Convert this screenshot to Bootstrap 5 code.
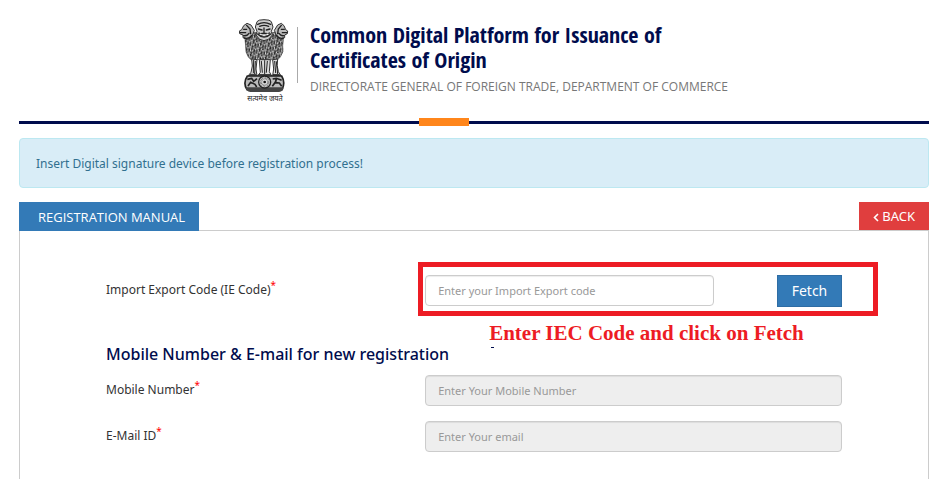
<!DOCTYPE html>
<html lang="en">
<head>
<meta charset="utf-8">
<meta name="viewport" content="width=device-width, initial-scale=1">
<title>Common Digital Platform for Issuance of Certificates of Origin</title>
<link href="https://cdn.jsdelivr.net/npm/bootstrap@5.3.0/dist/css/bootstrap.min.css" rel="stylesheet">
<style>
  body { font-family: "Noto Sans", "Open Sans", sans-serif; font-size: 12px; line-height: 20px; color: #333; background: #fff; }
  .page-shell { padding: 0 19px; }
  .site-header { padding: 19px 0 18px 220px; min-height: 121px; }
  .emblem { width: 50px; height: 83px; }
  .brand-text { border-left: 1px solid #aaa; padding-left: 12px; margin: 8px 0 0 8px; height: 56px; }
  .brand-title { font-family: "Open Sans Condensed", "Liberation Sans Narrow", "Open Sans", sans-serif; font-weight: 700; font-size: 22px; line-height: 25px; color: #000c4d; margin-top: -5px; }
  .brand-sub { font-family: "Open Sans", sans-serif; font-size: 12px; line-height: 22px; color: #777; }
  .rule { height: 3px; background: #000c4d; }
  .rule-accent { position: absolute; left: 400px; top: -3px; width: 50px; height: 8px; background: #ff861b; }
  .notice { margin: 14px 0; padding: 15px 16px 13px; color: #31708f; background: #d9edf7; border: 1px solid #bce8f1; border-radius: 4px; }
  .tab-title { background: #337ab7; color: #fff; font-family: "Open Sans", sans-serif; font-size: 13px; line-height: 20px; padding: 5px 14px 4px 19px; margin-bottom: -1px; }
  .btn-back { background: #e03e3e; color: #fff; border: 0; border-radius: 0; font-size: 13px; line-height: 20px; padding: 4px 14px; min-width: 70px; }
  .btn-back:hover { background: #c93232; color: #fff; }
  .panel { border: 1px solid #ccc; border-bottom: 0; padding: 44px 86px 24px; }
  .panel .row { --bs-gutter-x: 30px; }
  .panel label { padding-top: 5px; }
  .field { height: 31px; font-size: 11px; line-height: 20px; padding: 4px 12px; border: 1px solid #ccc; border-radius: 4px; box-shadow: inset 0 1px 1px rgba(0,0,0,.075); }
  .field::placeholder { color: #999; opacity: 1; }
  .field:disabled { background: #eee; }
  .field-row { margin-bottom: 15px; }
  .req { color: #f00; font-size: 10px; top: -5px; }
  .btn-fetch { background: #337ab7; border: 1px solid #2e6da4; border-radius: 0; color: #fff; font-size: 14px; line-height: 20px; padding: 5px 0; width: 65px; }
  .btn-fetch:hover { background: #286090; color: #fff; }
  .fetch-line { gap: 63px; }
  .callout-frame { position: absolute; left: -7px; right: -36px; top: -13px; bottom: -9px; border: 5px solid #ed1c24; pointer-events: none; }
  .callout-text { position: absolute; left: 64px; top: 46px; font: bold 21px/24px "Liberation Serif", serif; color: #ed1c24; white-space: nowrap; }
  .callout-text::after { content: ""; display: block; width: 3px; height: 1px; margin: 2px 0 0 2px; background: #000c4d; }
  .section-title { font-size: 16px; font-weight: 500; line-height: 22px; color: #000c4d; margin: 36px 0 10px; }
</style>
</head>
<body>
<div class="page-shell min-vh-100 d-flex flex-column">
  <header class="site-header d-flex align-items-start">
    <svg class="emblem flex-shrink-0" viewBox="0 0 150 249" role="img" aria-label="State Emblem of India">
      <defs>
        <pattern id="mane" width="23" height="19" patternUnits="userSpaceOnUse" patternTransform="rotate(12)">
          <rect width="23" height="19" fill="#888"/>
          <path d="M2 3 Q6 9 3 14 M9 0 Q13 5 10 9 M17 4 Q21 9 16 13 M9 13 Q13 15 12 19 M21 15 L19 19" fill="none" stroke="#1c1c1c" stroke-width="4"/>
          <path d="M6 2 Q9 8 6 12 M14 6 L13 11 M20 1 L22 5 M6 16 L5 19 M16 16 L15 19" fill="none" stroke="#eee" stroke-width="2.5"/>
        </pattern>
      </defs>
      <path d="M22 42 Q15 62 20 80 Q18 100 28 114 L38 124 L62 121 L75 126 L90 121 L114 124 L124 114 Q136 98 131 80 Q136 62 129 42 L100 40 Q76 62 52 40Z" fill="url(#mane)" stroke="#444" stroke-width="2"/>
      <g fill="#ddd" stroke="#333" stroke-width="3" stroke-linejoin="round">
        <path d="M38 120 Q43 142 36 160 L28 170 H54 L51 150 L54 122Z M61 122 L64 160 L56 171 H98 L91 158 L94 122Z M101 122 L104 150 L101 170 H126 L118 158 Q112 140 116 120Z"/>
        <path d="M14 20 L8 32 L1 36 L2 44 L12 48 L12 56 L26 61 L38 54 L46 34 L36 18 L24 13Z M135 20 L140 32 L146 36 L145 44 L137 48 L137 56 L126 61 L114 54 L106 34 L116 18 L127 13Z" fill="#bbb"/>
        <path d="M54 8 Q57 2 75 2 Q94 2 97 8 L102 24 L97 37 L100 48 Q90 65 75 65 Q60 65 51 48 L54 37 L49 24Z" fill="#ccc"/>
      </g>
      <g fill="none" stroke="#222" stroke-width="4" stroke-linecap="round">
        <path d="M56 16 Q75 6 95 16 M62 22 Q75 16 89 22 M58 30 L69 33 M82 33 L93 30 M75 27 V41 M68 43 H82 M56 45 Q75 64 95 45 M60 42 Q75 58 91 42"/>
        <path d="M63 46 Q75 54 88 46" stroke="#fff" stroke-width="3"/>
        <path d="M4 41 H20 M14 31 H23 M14 50 Q24 52 30 43 M23 19 L33 30 L35 44 M16 57 Q30 61 38 49 M143 41 H130 M136 31 H127 M135 50 Q126 52 120 43 M127 19 L118 30 L116 44 M133 57 Q121 61 113 49"/>
        <path d="M44 124 L43 161 M49 127 L47 164 M67 127 L70 160 M77 125 V165 M85 127 L82 160 M107 127 L110 161 M112 128 L116 164 M34 166 H51 M60 167 H94 M103 167 H121" stroke-width="3"/>
      </g>
      <path d="M25 171 H128 Q140 191 129 212 H24 Q11 192 25 171Z" fill="#bbb" stroke="#222" stroke-width="5"/>
      <path d="M20 205 H134 Q133 218 120 219 H34 Q21 218 20 205Z" fill="#444"/>
      <circle cx="77" cy="189" r="18" fill="#ddd" stroke="#222" stroke-width="4"/>
      <circle cx="77" cy="189" r="11" fill="none" stroke="#666" stroke-width="7" stroke-dasharray="2 2"/>
      <circle cx="77" cy="189" r="4" fill="#111"/>
      <path d="M25 181 L38 178 L44 187 L54 179 M27 201 L35 190 L48 196 L53 204 M101 180 L112 178 L128 184 M100 202 L108 191 L121 192 L128 202 M112 180 L109 191" fill="none" stroke="#222" stroke-width="5"/>
      <text x="78" y="245" text-anchor="middle" font-family="Noto Sans, Noto Sans Devanagari, sans-serif" font-size="22" fill="#222">सत्यमेव जयते</text>
    </svg>
    <div class="brand-text">
      <h1 class="brand-title mb-0">Common Digital Platform for Issuance of<br>Certificates of Origin</h1>
      <div class="brand-sub text-uppercase pt-1">Directorate General of Foreign Trade, Department of Commerce</div>
    </div>
  </header>
  <div class="rule position-relative"><div class="rule-accent"></div></div>

  <div class="notice" role="alert">Insert Digital signature device before registration process!</div>

  <div class="d-flex justify-content-between align-items-start">
    <h2 class="tab-title position-relative fw-normal text-nowrap">REGISTRATION MANUAL</h2>
    <button type="button" class="btn btn-back text-nowrap"><svg width="6" height="9" viewBox="0 0 6 9" aria-hidden="true"><path d="M5 1 L1.5 4.5 L5 8" fill="none" stroke="#fff" stroke-width="1.6"/></svg> BACK</button>
  </div>

  <form class="panel flex-grow-1">
    <div class="row">
      <div class="col-5"><label for="iec">Import Export Code (IE Code)<sup class="req">*</sup></label></div>
      <div class="col-7">
        <div class="fetch-line d-flex position-relative">
          <input id="iec" type="text" class="form-control field" placeholder="Enter your Import Export code">
          <button type="button" class="btn btn-fetch flex-shrink-0">Fetch</button>
          <div class="callout-frame"></div>
          <div class="callout-text">Enter IEC Code and click on Fetch</div>
        </div>
      </div>
    </div>
    <h3 class="section-title">Mobile Number &amp; E-mail for new registration</h3>
    <div class="row field-row">
      <div class="col-5"><label for="mobile">Mobile Number<sup class="req">*</sup></label></div>
      <div class="col-7"><input id="mobile" type="tel" class="form-control field" placeholder="Enter Your Mobile Number" disabled></div>
    </div>
    <div class="row">
      <div class="col-5"><label for="email">E-Mail ID<sup class="req">*</sup></label></div>
      <div class="col-7"><input id="email" type="email" class="form-control field" placeholder="Enter Your email" disabled></div>
    </div>
  </form>
</div>
<script src="https://cdn.jsdelivr.net/npm/bootstrap@5.3.0/dist/js/bootstrap.bundle.min.js"></script>
</body>
</html>
